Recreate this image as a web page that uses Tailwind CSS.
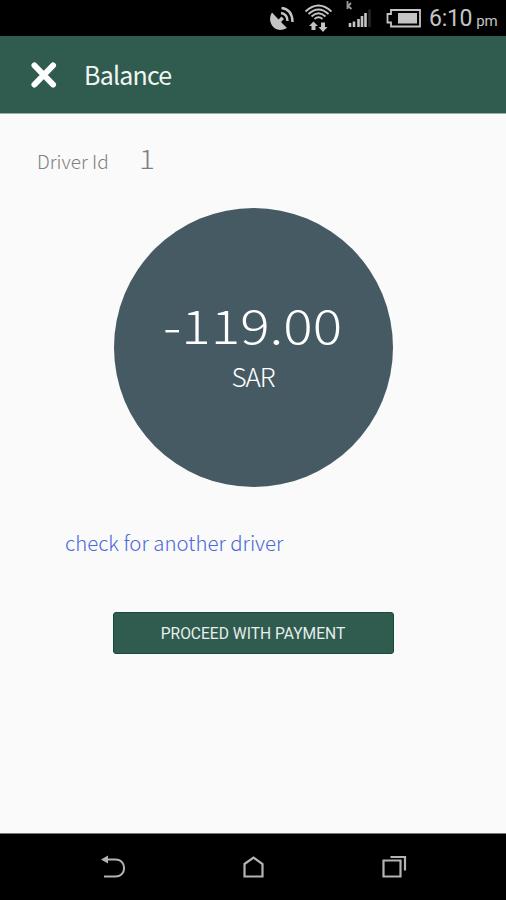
<!DOCTYPE html>
<html lang="en">
  <head>
    <meta charset="UTF-8" />
    <meta name="viewport" content="width=device-width, initial-scale=1.0" />
    <title>Balance</title>
    <script src="https://cdn.jsdelivr.net/npm/@tailwindcss/browser@4"></script>
  </head>

  <body class="flex h-[900px] w-[506px] flex-col overflow-hidden bg-[#fafafa] font-['Noto_Sans_CJK_SC',sans-serif] font-light whitespace-nowrap">
    <!-- status bar -->
    <div class="flex h-9 shrink-0 items-start bg-black pl-[268px] text-[#c4c4c4]">
      <svg class="h-9 w-[108px] shrink-0" viewBox="268 0 108 36" fill="none" stroke="currentColor">
        <path d="M272 12.500C268.500 18 270 25 275 28.500Q280 31.500 287 28L281 22L284 19L281.500 16.500L278.500 19.500Z" fill="currentColor" stroke="none" />
        <path d="M281 13Q287.500 14 287.500 21M281.500 8Q292.500 9.500 292.500 22" stroke-width="2.400" />
        <path d="M305.500 11.500Q318.500 -.5 331.500 11.500M308.500 14Q318.500 5 328.500 14M311.500 16.500Q318.500 10 325.500 16.500M314.500 19Q318.500 15.500 322.500 19" stroke-width="1.800" />
        <path d="M313.500 21.500L318 26H315.500V30H311.500V26H309ZM323 32L318.500 27H321V22.500H325V27H327.500Z" fill="currentColor" stroke="none" />
        <path d="M347.500 1V9M351 3L348 6L351.500 9" stroke="#999" stroke-width="1.800" />
        <path d="M350 23V27M354 21.500V27M358.500 19V27M362 16V27M365.500 13V27" stroke-width="2.600" />
        <path d="M369.500 9.500V27" stroke="#292929" stroke-width="2.500" />
      </svg>
      <svg class="ml-2.5 h-9 w-9 shrink-0" viewBox="386 0 36 36" fill="none" stroke="currentColor">
        <path d="M391 10H420V26.500H391V22.500H387.500V14H391Z" stroke-width="1.800" />
        <path d="M398 13H417V23.500H398Z" fill="currentColor" stroke="none" />
      </svg>
      <div class="ml-[7px] flex items-baseline font-[Roboto,sans-serif] font-normal">
        <span class="text-[23px] leading-[38px] tracking-[-0.3px]">6:10</span>
        <span class="ml-[4px] text-[15px] leading-[38px]">pm</span>
      </div>
    </div>

    <!-- toolbar -->
    <header class="flex h-[78px] shrink-0 items-center border-b border-[#9caea7] bg-[#305c50] pl-[30px] text-[#f0f5f3]">
      <svg class="h-7 w-7" viewBox="0 0 28 28" stroke="white" stroke-width="6" stroke-linecap="round">
        <path d="M4.500 4.500L23 23.500M23 4.500L4.500 23.500" />
      </svg>
      <h1 class="mb-0.5 ml-[26px] text-[25px] leading-9 font-normal tracking-[-0.8px]">Balance</h1>
    </header>

    <main class="flex flex-1 flex-col items-center">
      <div class="flex h-[94px] items-baseline self-start pt-[24px] pl-[37px] text-[#808080]">
        <span class="text-[19px] leading-10">Driver Id</span>
        <span class="ml-[30px] origin-left scale-x-110 text-[27px] leading-10">1</span>
      </div>

      <div class="flex h-[279px] w-[279px] shrink-0 flex-col items-center rounded-full bg-[#465a63] text-white">
        <div class="mt-[82px] scale-x-[1.17] text-[47px] leading-[68px]">-119.00</div>
        <div class="text-[26px] leading-9 tracking-[-1px]">SAR</div>
      </div>

      <a class="mt-[39px] ml-[65px] self-start text-[20.4px] leading-8 text-[#4a68d8]" href="#">check for another driver</a>

      <button type="button" class="mt-[54px] h-[42px] w-[281px] rounded-[3px] border border-[#174a38] bg-[#305c50] pt-[3px] font-[Roboto,sans-serif] text-[15.6px] font-normal text-[#e7eeeb]">PROCEED WITH PAYMENT</button>
    </main>

    <!-- navigation bar -->
    <nav class="grid h-[67px] shrink-0 grid-cols-[140px_140px_140px] justify-center border-t border-[#777] bg-black">
      <svg class="h-[66px] w-[140px]" viewBox="43 834 140 66" fill="none" stroke="#b4b4b4" stroke-width="2">
        <path d="M104 876.500H115.500C127 876.500 127 859.500 115.500 859.500H106" />
        <path d="M101 859.500L108 855.500V863.500Z" fill="#b4b4b4" stroke="none" />
      </svg>
      <svg class="h-[66px] w-[140px]" viewBox="183 834 140 66" fill="none" stroke="#b4b4b4" stroke-width="2.200">
        <path d="M244.500 864L253.500 857.500L262.500 864V876.500H244.500Z" />
      </svg>
      <svg class="h-[66px] w-[140px]" viewBox="323 834 140 66" fill="none" stroke="#b4b4b4" stroke-width="2.200">
        <path d="M383.500 860.500H400.500V876.500H383.500Z" />
        <path d="M390.500 857H405V870.500" />
      </svg>
    </nav>
  </body>
</html>
